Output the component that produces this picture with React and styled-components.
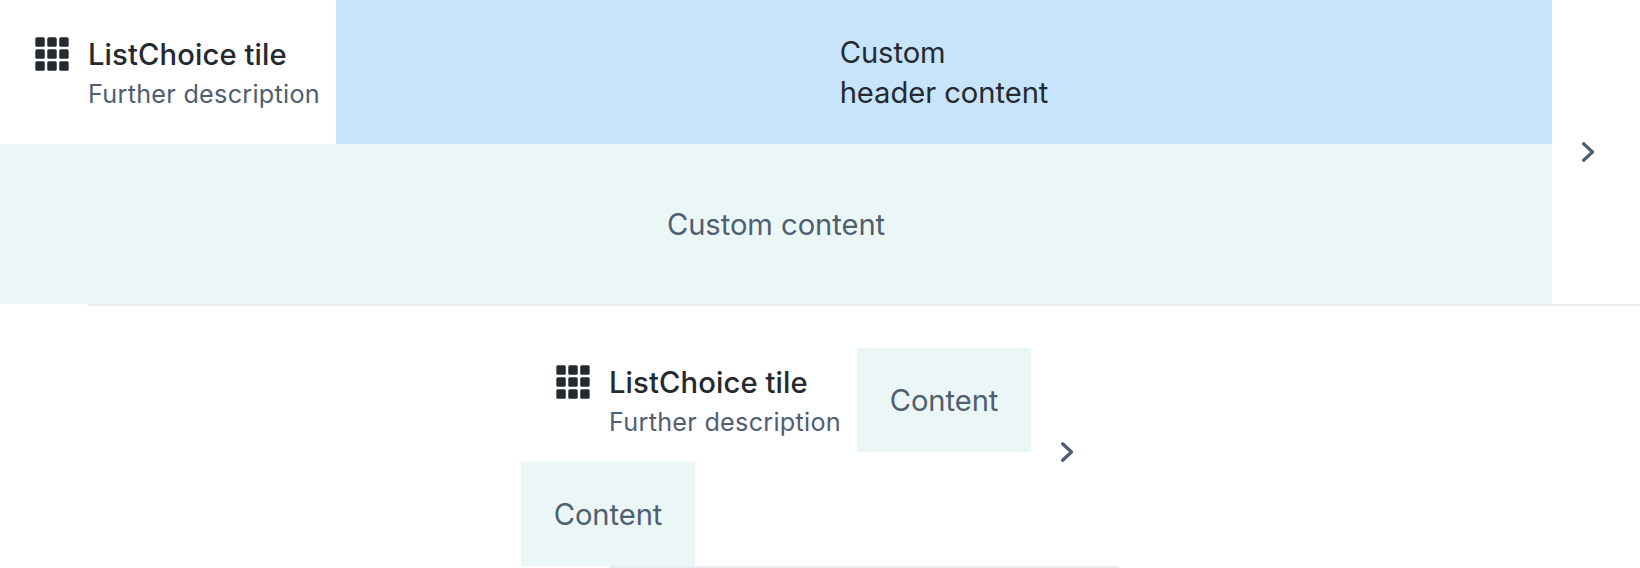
import React from "react";
import styled, { createGlobalStyle } from "styled-components";

const GlobalStyle = createGlobalStyle`
  *, *::before, *::after { box-sizing: border-box; }
  body {
    margin: 0;
    background: #fff;
    color: #252a31;
    font-family: Inter, Roboto, "Liberation Sans", sans-serif;
    font-size: 29.2px;
    line-height: 40px;
    letter-spacing: -0.06px;
  }
`;

const Stack = styled.main`
  display: flex;
  flex-direction: column;
  align-items: center;
  gap: 32px;
`;

const Tile = styled.section`
  display: flex;
  align-items: center;
  position: relative;
  width: ${(p) => (p.$wide ? "100%" : "598px")};
  padding-bottom: 2px;

  &::after {
    content: "";
    position: absolute;
    left: 88px;
    right: 0;
    bottom: 0;
    height: 2px;
    background: #e8edf1;
  }
`;

const TileBody = styled.div`
  flex: 1;
  min-width: 0;
`;

const Header = styled.header`
  display: flex;
  align-items: center;
`;

const Summary = styled.div`
  display: flex;
  flex: none;
  width: 336px;
  padding: 24px 0 24px 32px;
  gap: 16px;
`;

const Icon = styled.svg`
  display: block;
  flex: none;
  width: 40px;
  height: 40px;
`;

const Labels = styled.div`
  white-space: nowrap;
`;

const Title = styled.div`
  height: 40px;
  font-weight: 500;
  line-height: 41px;
  letter-spacing: 0.12px;
`;

const Description = styled.div`
  height: 36px;
  color: #4f5e71;
  font-size: 25.2px;
  line-height: 40px;
  letter-spacing: 0.28px;
`;

const HeaderPanel = styled.div`
  flex: 1;
  display: flex;
  justify-content: center;
  padding: 33px 32px 31px;
  background: #c7e4fa;
`;

const ContentPanel = styled.div`
  display: flex;
  justify-content: center;
  padding: 61px 32px 59px;
  background: #ebf7f6;
  color: #4f5e71;
`;

const ContentChip = styled.div`
  width: 174px;
  padding: 33px 0 31px;
  text-align: center;
  background: #ebf7f6;
  color: #4f5e71;
`;

const Action = styled.div`
  flex: none;
  padding: 0 32px 0 16px;
`;

const steps = [2, 9.17, 16.34];

function GridIcon() {
  return (
    <Icon viewBox="0 0 24 24" fill="#252a31" aria-hidden="true">
      {steps.map((y) =>
        steps.map((x) => (
          <rect key={`${x}-${y}`} x={x} y={y} width="5.66" height="5.66" rx="0.9" />
        ))
      )}
    </Icon>
  );
}

function ChevronIcon() {
  return (
    <Icon
      viewBox="0 0 24 24"
      fill="none"
      stroke="#4f5e71"
      strokeWidth="1.95"
      strokeLinecap="round"
      strokeLinejoin="round"
      aria-hidden="true"
    >
      <path d="M9.35 7.05L14.7 12L9.35 16.95" />
    </Icon>
  );
}

function ListChoice({ wide, headerContent, children }) {
  return (
    <Tile $wide={wide}>
      <TileBody>
        <Header>
          <Summary>
            <GridIcon />
            <Labels>
              <Title>ListChoice tile</Title>
              <Description>Further description</Description>
            </Labels>
          </Summary>
          {headerContent}
        </Header>
        {children}
      </TileBody>
      <Action>
        <ChevronIcon />
      </Action>
    </Tile>
  );
}

export default function App() {
  return (
    <>
      <GlobalStyle />
      <Stack>
        <ListChoice
          wide
          headerContent={
            <HeaderPanel>
              <div>
                Custom
                <br />
                header content
              </div>
            </HeaderPanel>
          }
        >
          <ContentPanel>Custom content</ContentPanel>
        </ListChoice>
        <ListChoice headerContent={<ContentChip>Content</ContentChip>}>
          <ContentChip>Content</ContentChip>
        </ListChoice>
      </Stack>
    </>
  );
}
